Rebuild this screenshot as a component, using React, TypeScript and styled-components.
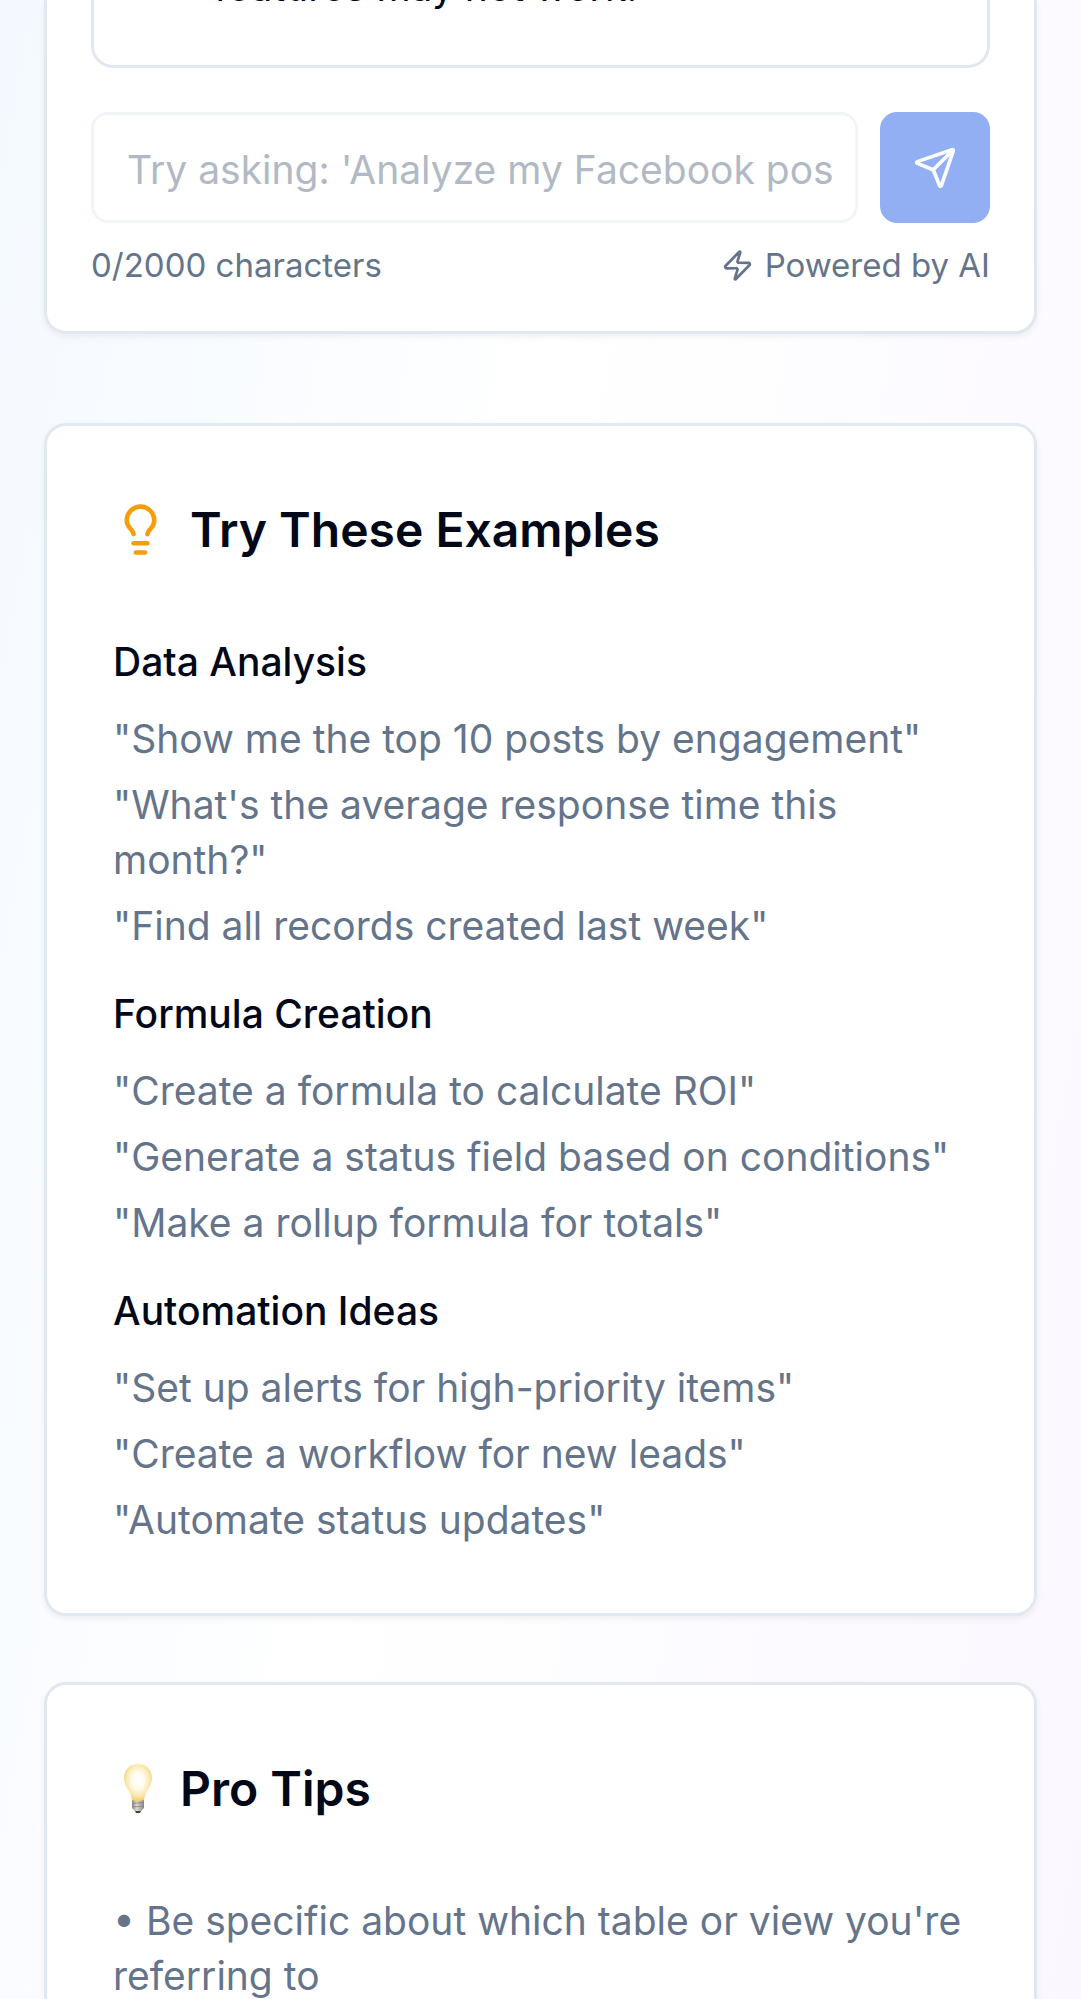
import React, { useState } from "react";
import styled, { createGlobalStyle } from "styled-components";
import { Lightbulb, Send, Zap } from "lucide-react";

const GlobalStyle = createGlobalStyle`
  *, *::before, *::after { box-sizing: border-box; }
  html, body { margin: 0; height: 100%; }
  #root { height: 100%; }
  body {
    font-family: Inter, "Liberation Sans", sans-serif;
    color: #020817;
    background: #ffffff;
  }
  h2, h3, p, ul { margin: 0; padding: 0; }
`;

const Page = styled.main`
  height: 100%;
  overflow: hidden;
  padding: 0 44px;
  background: linear-gradient(100deg, #f4f9ff 0%, #ffffff 43%, #faf7ff 100%);
`;

const Card = styled.section`
  background: #ffffff;
  border: 3px solid #e2e8f0;
  border-radius: 22px;
  box-shadow: 0 3px 6px rgba(0, 0, 0, 0.06);
`;

const ChatCard = styled(Card)`
  border-top: 0;
  border-radius: 0 0 22px 22px;
  padding: 0 44px 44px;
  margin-bottom: 89px;
`;

const MessageBox = styled.div`
  height: 68px;
  border: 3px solid #e2e8f0;
  border-top: 0;
  border-radius: 0 0 22px 22px;
  padding: 0 120px;
  margin-bottom: 44px;
  overflow: hidden;
`;

const Message = styled.p`
  display: flex;
  align-items: flex-end;
  height: 14px;
  font-size: 39px;
  line-height: 55px;
`;

const Composer = styled.form`
  display: flex;
  gap: 22px;
`;

const PromptInput = styled.input`
  flex: 1;
  min-width: 0;
  height: 111px;
  padding: 4px 22px 0 33px;
  border: 3px solid #f1f5f9;
  border-radius: 17px;
  background: #ffffff;
  color: #020817;
  font: inherit;
  font-size: 39px;
  &::placeholder { color: #b1b9c5; opacity: 1; }
`;

const SendButton = styled.button`
  display: flex;
  align-items: center;
  justify-content: center;
  width: 110px;
  height: 111px;
  border: 0;
  border-radius: 17px;
  background: #92aff3;
  color: #fbfcff;
`;

const Meta = styled.div`
  display: flex;
  justify-content: space-between;
  margin-top: 20px;
  font-size: 33px;
  line-height: 44px;
  color: #64748b;
`;

const Powered = styled.span`
  display: flex;
  align-items: center;
  gap: 11px;
`;

const InfoCard = styled(Card)`
  padding: 65px 66px 66px;
  margin-bottom: 66px;
`;

const Title = styled.h2<{ $gap: number }>`
  display: flex;
  align-items: center;
  gap: ${(p) => p.$gap}px;
  margin-bottom: 66px;
  font-size: 48px;
  line-height: 77px;
  font-weight: 600;
`;

const Groups = styled.div`
  display: flex;
  flex-direction: column;
  gap: 33px;
`;

const GroupTitle = styled.h3`
  margin-bottom: 22px;
  font-size: 39px;
  line-height: 55px;
  font-weight: 500;
`;

const Lines = styled.ul`
  display: flex;
  flex-direction: column;
  gap: 11px;
  list-style: none;
  font-size: 39px;
  line-height: 55px;
  color: #64748b;
`;

const groups = [
  {
    title: "Data Analysis",
    items: [
      '"Show me the top 10 posts by engagement"',
      '"What\'s the average response time this month?"',
      '"Find all records created last week"',
    ],
  },
  {
    title: "Formula Creation",
    items: [
      '"Create a formula to calculate ROI"',
      '"Generate a status field based on conditions"',
      '"Make a rollup formula for totals"',
    ],
  },
  {
    title: "Automation Ideas",
    items: [
      '"Set up alerts for high-priority items"',
      '"Create a workflow for new leads"',
      '"Automate status updates"',
    ],
  },
];

function BulbEmoji() {
  return (
    <svg width="50" height="50" viewBox="0 0 50 50" aria-hidden="true">
      <defs>
        <radialGradient id="glass" cx="0.5" cy="0.44" r="0.56">
          <stop offset="0" stopColor="#ffffff" />
          <stop offset="0.4" stopColor="#fffbed" />
          <stop offset="0.75" stopColor="#fae8ae" />
          <stop offset="1" stopColor="#f2cd6c" />
        </radialGradient>
        <linearGradient id="base" x1="0" y1="0" x2="1" y2="0">
          <stop offset="0" stopColor="#8d8780" />
          <stop offset="0.4" stopColor="#dedad4" />
          <stop offset="1" stopColor="#8b8681" />
        </linearGradient>
      </defs>
      <path d="M21 45h8l-2 4h-4z" fill="#3f4143" />
      <path d="M19 35h12v9l-3 3h-6l-3-3z" fill="url(#base)" />
      <path d="M19 39.500l12-1M19 43l12-1" stroke="#88827b" strokeWidth="0.800" />
      <path
        d="M25 0C16.500 0 11 6 11 14c0 9 6.500 12 8 22 3 1.500 9 1.500 12 0 1.500-10 8-13 8-22C39 6 33.500 0 25 0z"
        fill="url(#glass)"
      />
    </svg>
  );
}

export default function App() {
  const [text, setText] = useState("");
  return (
    <>
      <GlobalStyle />
      <Page>
        <ChatCard>
          <MessageBox>
            <Message>features may not work.</Message>
          </MessageBox>
          <Composer onSubmit={(e) => e.preventDefault()}>
            <PromptInput
              aria-label="Message"
              maxLength={2000}
              value={text}
              onChange={(e) => setText(e.target.value)}
              placeholder="Try asking: 'Analyze my Facebook posts'"
            />
            <SendButton type="submit" aria-label="Send">
              <Send size={44} />
            </SendButton>
          </Composer>
          <Meta>
            <span>{text.length}/2000 characters</span>
            <Powered>
              <Zap size={33} />
              Powered by AI
            </Powered>
          </Meta>
        </ChatCard>

        <InfoCard>
          <Title $gap={22}>
            <Lightbulb size={55} color="#f59e0b" />
            Try These Examples
          </Title>
          <Groups>
            {groups.map((group) => (
              <div key={group.title}>
                <GroupTitle>{group.title}</GroupTitle>
                <Lines>
                  {group.items.map((item) => (
                    <li key={item}>{item}</li>
                  ))}
                </Lines>
              </div>
            ))}
          </Groups>
        </InfoCard>

        <InfoCard>
          <Title $gap={17}>
            <BulbEmoji />
            Pro Tips
          </Title>
          <Lines>
            <li>• Be specific about which table or view you're referring to</li>
          </Lines>
        </InfoCard>
      </Page>
    </>
  );
}
